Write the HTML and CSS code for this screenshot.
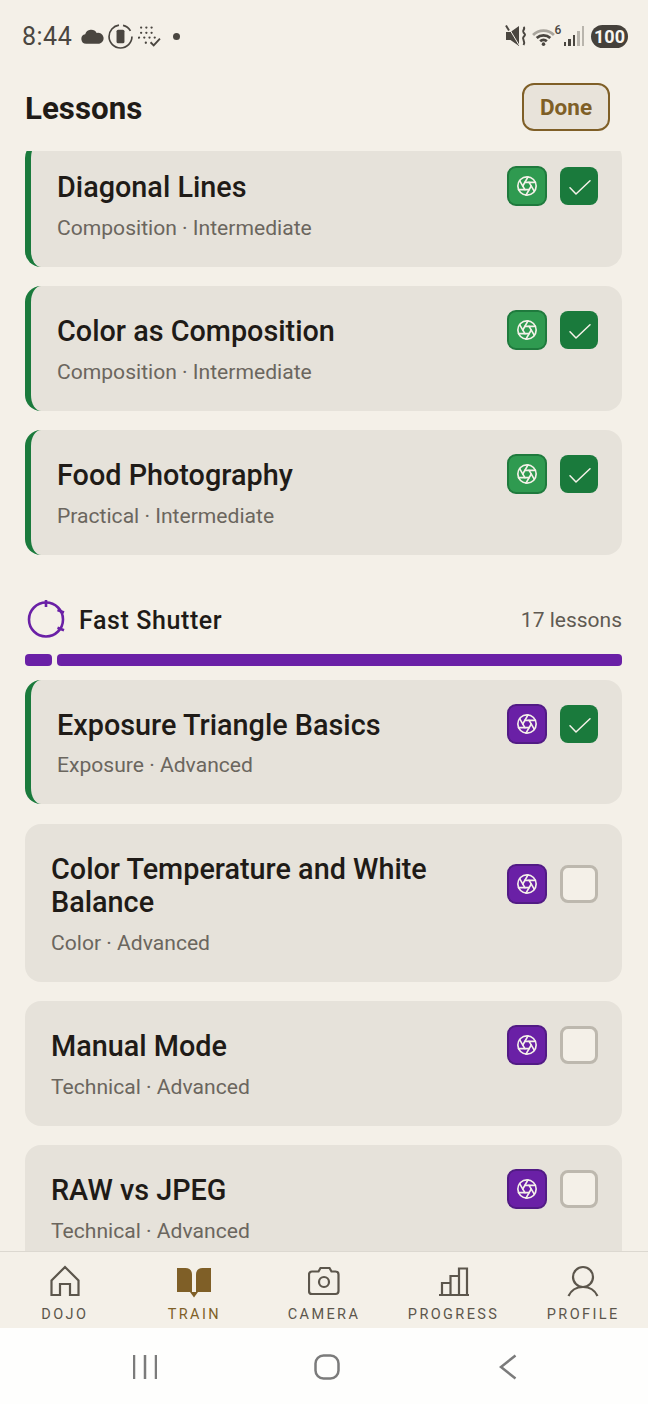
FILE: index.html
```html
<!DOCTYPE html>
<html lang="en">
<head>
    <meta charset="UTF-8">
    <meta name="viewport" content="width=device-width, initial-scale=1.0">
    <title>Lessons</title>
    <link rel="stylesheet" href="styles.css">
</head>
<body>
    <!-- shared icons -->
    <svg class="defs" width="0" height="0">
        <symbol id="aperture" viewBox="0 0 24 24" fill="none" stroke="currentColor" stroke-width="1.800" stroke-linecap="round" stroke-linejoin="round">
            <circle cx="12" cy="12" r="10"/>
            <path d="m14.31 8 5.74 9.94"/>
            <path d="M9.69 8h11.48"/>
            <path d="m7.38 12 5.74-9.94"/>
            <path d="M9.69 16 3.95 6.06"/>
            <path d="M14.31 16H2.83"/>
            <path d="m16.62 12-5.74 9.94"/>
        </symbol>
        <symbol id="check" viewBox="0 0 24 24" fill="none" stroke="currentColor" stroke-width="1.500" stroke-linecap="round" stroke-linejoin="round">
            <path d="M23 6.700 9 20 3 13.700"/>
        </symbol>
    </svg>

    <div class="app">
        <div class="status-bar">
            <div class="status-left">
                <span class="time">8:44</span>
                <svg class="st-cloud" viewBox="0 0 22 14"><path d="M5 14a4.600 4.600 0 0 1-1-9.100A6 6 0 0 1 15 3.600 5.300 5.300 0 0 1 17.500 14z"/></svg>
                <svg class="st-phone" viewBox="0 0 24 24">
                    <circle class="ring" cx="12" cy="12" r="11"/>
                    <rect x="8.200" y="5.500" width="7.600" height="13" rx="1.500"/>
                </svg>
                <svg class="st-dots" viewBox="0 0 22 20">
                    <circle cx="3" cy="1.500" r="1.100"/><circle cx="8" cy="1.500" r="1.100"/><circle cx="13" cy="1.500" r="1.100"/>
                    <circle cx="3" cy="6.500" r="1.100"/><circle cx="8" cy="6.500" r="1.100"/><circle cx="13" cy="6.500" r="1.100"/>
                    <circle cx="1" cy="11" r="1.100"/><circle cx="6" cy="11" r="1.100"/><circle cx="11" cy="11" r="1.100"/><circle cx="16" cy="11" r="1.100"/>
                    <circle cx="7.500" cy="16" r="1.100"/>
                    <path class="tick" d="M12 15.500l3 3 6-6.500"/>
                </svg>
                <span class="st-dot"></span>
            </div>
            <div class="status-right">
                <svg class="st-mute" viewBox="0 0 22 22">
                    <path d="M1 7h4.500L14 1v20l-8.500-6H1z"/>
                    <path class="cut" d="M3.500 2.500 14 20"/>
                    <path class="stub" d="M1 0.500l3 5"/>
                    <path class="wave" d="M18.500 2c2.500 2-2 3.500 0 5.500s2 2.500 0 4.500 2.500 4 0 8"/>
                </svg>
                <span class="st-wifi">
                    <svg viewBox="0 0 22 18">
                        <path class="wifi-off" d="M1 7.500a14 14 0 0 1 20 0"/>
                        <path class="wifi-on" d="M4.500 10.500a9.500 9.500 0 0 1 13 0"/>
                        <path class="wifi-on" d="M7.800 13.500a4.800 4.800 0 0 1 6.400 0"/>
                        <circle cx="11" cy="16.300" r="1.700"/>
                    </svg>
                    <span class="wifi-num">6</span>
                </span>
                <span class="st-signal">
                    <i class="on s1"></i><i class="on s2"></i><i class="on s3"></i><i class="s4"></i><i class="s5"></i>
                </span>
                <span class="st-battery">100</span>
            </div>
        </div>

        <div class="header">
            <h1>Lessons</h1>
            <button type="button" class="done-button">Done</button>
        </div>

        <div class="lesson-scroll">
            <div class="lesson-list">
                <div class="lesson done green">
                    <div class="lesson-top">
                        <div class="lesson-title">Diagonal Lines</div>
                        <div class="lesson-actions">
                            <span class="shot-button"><svg><use href="#aperture"/></svg></span>
                            <span class="tick-box"><svg><use href="#check"/></svg></span>
                        </div>
                    </div>
                    <div class="lesson-sub">Composition · Intermediate</div>
                </div>

                <div class="lesson done green">
                    <div class="lesson-top">
                        <div class="lesson-title">Color as Composition</div>
                        <div class="lesson-actions">
                            <span class="shot-button"><svg><use href="#aperture"/></svg></span>
                            <span class="tick-box"><svg><use href="#check"/></svg></span>
                        </div>
                    </div>
                    <div class="lesson-sub">Composition · Intermediate</div>
                </div>

                <div class="lesson done green">
                    <div class="lesson-top">
                        <div class="lesson-title">Food Photography</div>
                        <div class="lesson-actions">
                            <span class="shot-button"><svg><use href="#aperture"/></svg></span>
                            <span class="tick-box"><svg><use href="#check"/></svg></span>
                        </div>
                    </div>
                    <div class="lesson-sub">Practical · Intermediate</div>
                </div>

                <div class="section-head">
                    <svg class="section-icon" viewBox="0 0 40 40" fill="none">
                        <circle cx="20" cy="19.500" r="17"/>
                        <path d="M20 0v7M31.500 10 38 12.500M31.500 27.700 38 30.300"/>
                    </svg>
                    <span class="section-name">Fast Shutter</span>
                    <span class="section-count">17 lessons</span>
                </div>
                <div class="section-bar">
                    <span class="bar-short"></span>
                    <span class="bar-long"></span>
                </div>

                <div class="lesson done purple">
                    <div class="lesson-top">
                        <div class="lesson-title">Exposure Triangle Basics</div>
                        <div class="lesson-actions">
                            <span class="shot-button"><svg><use href="#aperture"/></svg></span>
                            <span class="tick-box"><svg><use href="#check"/></svg></span>
                        </div>
                    </div>
                    <div class="lesson-sub">Exposure · Advanced</div>
                </div>

                <div class="lesson purple">
                    <div class="lesson-top">
                        <div class="lesson-title">Color Temperature and White Balance</div>
                        <div class="lesson-actions">
                            <span class="shot-button"><svg><use href="#aperture"/></svg></span>
                            <span class="tick-box"></span>
                        </div>
                    </div>
                    <div class="lesson-sub">Color · Advanced</div>
                </div>

                <div class="lesson purple">
                    <div class="lesson-top">
                        <div class="lesson-title">Manual Mode</div>
                        <div class="lesson-actions">
                            <span class="shot-button"><svg><use href="#aperture"/></svg></span>
                            <span class="tick-box"></span>
                        </div>
                    </div>
                    <div class="lesson-sub">Technical · Advanced</div>
                </div>

                <div class="lesson purple">
                    <div class="lesson-top">
                        <div class="lesson-title">RAW vs JPEG</div>
                        <div class="lesson-actions">
                            <span class="shot-button"><svg><use href="#aperture"/></svg></span>
                            <span class="tick-box"></span>
                        </div>
                    </div>
                    <div class="lesson-sub">Technical · Advanced</div>
                </div>
            </div>
        </div>

        <div class="tab-bar">
            <div class="tab">
                <svg class="tab-icon" viewBox="0 0 32 32"><path d="M2.500 15.500 16 2l13.500 13.500V30H21V19H11v11H2.500z"/></svg>
                <span class="tab-label">DOJO</span>
            </div>
            <div class="tab active">
                <svg class="tab-icon book" viewBox="0 0 34 30">
                    <path d="M0 0h8.500c4 0 6.500 2.500 6.500 6.500V24H0z"/>
                    <path d="M34 0h-8.500c-4 0-6.500 2.500-6.500 6.500V24h15z"/>
                    <path d="M13 24h8l-4 5.500z"/>
                </svg>
                <span class="tab-label">TRAIN</span>
            </div>
            <div class="tab">
                <svg class="tab-icon" viewBox="0 0 32 32">
                    <path d="M10.500 6.500 12.500 3h9l2 3.500h4a3 3 0 0 1 3 3V26a3 3 0 0 1-3 3H4a3 3 0 0 1-3-3V9.500a3 3 0 0 1 3-3z"/>
                    <circle cx="16" cy="17" r="5"/>
                </svg>
                <span class="tab-label">CAMERA</span>
            </div>
            <div class="tab">
                <svg class="tab-icon" viewBox="0 0 32 32">
                    <path d="M1 30h30M4 30V18h8.500V30M12.500 30V11h8.500V30M21 30V3.500h8V30"/>
                </svg>
                <span class="tab-label">PROGRESS</span>
            </div>
            <div class="tab">
                <svg class="tab-icon" viewBox="0 0 32 32">
                    <circle cx="16" cy="12" r="10"/>
                    <path d="M1.500 31c3-6.500 8-9 14.500-9s11.500 2.500 14.500 9"/>
                </svg>
                <span class="tab-label">PROFILE</span>
            </div>
        </div>

        <div class="nav-bar">
            <svg class="nav-recent" viewBox="0 0 24 24"><path d="M1 0v24M12 0v24M23 0v24"/></svg>
            <svg class="nav-home" viewBox="0 0 26 26"><rect x="1.500" y="1.500" width="23" height="23" rx="8"/></svg>
            <svg class="nav-back" viewBox="0 0 18 26"><path d="M16.500 1.500 2 13l14.500 11.500"/></svg>
        </div>
    </div>
</body>
</html>
```

FILE: styles.css
```css
* {
    box-sizing: border-box;
}
body {
    margin: 0;
    font-family: Roboto, "Liberation Sans", sans-serif;
    background-color: #f4f0e8;
    color: #1f1b17;
}
.defs {
    display: block;
    height: 0;
}
.app {
    display: flex;
    flex-direction: column;
    width: 648px;
    height: 1404px;
    overflow: hidden;
}

/* status bar */
.status-bar {
    display: flex;
    justify-content: space-between;
    align-items: center;
    height: 72px;
    padding: 0 20px 0 22px;
    color: #4a4640;
    fill: #4a4640;
}
.status-left,
.status-right {
    display: flex;
    align-items: center;
}
.time {
    font-size: 25px;
    letter-spacing: 0.500px;
    margin-right: 9px;
}
.st-cloud {
    width: 23px;
    height: 15px;
    margin-right: 4px;
}
.st-phone {
    width: 25px;
    height: 25px;
    margin-right: 5px;
}
.st-phone .ring {
    fill: none;
    stroke: #4a4640;
    stroke-width: 1.600;
    stroke-dasharray: 50 4 9 6;
}
.st-dots {
    width: 23px;
    height: 21px;
}
.st-dots .tick {
    fill: none;
    stroke: #4a4640;
    stroke-width: 1.800;
}
.st-dot {
    width: 7px;
    height: 7px;
    border-radius: 50%;
    background-color: #4a4640;
    margin-left: 12px;
}
.st-mute {
    width: 22px;
    height: 22px;
    margin-right: 5px;
}
.st-mute .cut {
    stroke: #f4f0e8;
    stroke-width: 1;
}
.st-mute .stub {
    stroke: #4a4640;
    stroke-width: 2;
}
.st-mute .wave {
    fill: none;
    stroke: #4a4640;
    stroke-width: 2;
}
.st-wifi {
    display: flex;
    align-items: flex-start;
    width: 32px;
}
.st-wifi svg {
    width: 23px;
    height: 19px;
}
.wifi-off {
    fill: none;
    stroke: #a9a59d;
    stroke-width: 2.600;
}
.wifi-on {
    fill: none;
    stroke: #4a4640;
    stroke-width: 2.600;
}
.wifi-num {
    font-size: 12px;
    font-weight: 500;
    line-height: 12px;
    margin-top: -3px;
}
.st-signal {
    display: flex;
    align-items: flex-end;
    gap: 2px;
    height: 20px;
    margin-right: 7px;
}
.st-signal i {
    width: 2.500px;
    background-color: #b9b5ad;
}
.st-signal .on {
    background-color: #4a4640;
}
.s1 { height: 4px; }
.s2 { height: 7px; }
.s3 { height: 11px; }
.s4 { height: 15px; }
.s5 { height: 20px; }
.st-battery {
    width: 37px;
    height: 23px;
    border-radius: 12px;
    background-color: #45413b;
    color: #f8f6f1;
    font-size: 18px;
    font-weight: 700;
    line-height: 23px;
    text-align: center;
}

/* header */
.header {
    display: flex;
    justify-content: space-between;
    align-items: center;
    height: 79px;
    padding: 0 38px 10px 25px;
}
h1 {
    margin: 3px 0 0;
    font-size: 31.300px;
    font-weight: 700;
}
.done-button {
    width: 88px;
    height: 48px;
    padding: 0;
    border: 2.500px solid #7f5f27;
    border-radius: 12px;
    background-color: #e8e3da;
    color: #7f5f27;
    font-family: inherit;
    font-size: 22.500px;
    font-weight: 700;
}

/* lessons */
.lesson-scroll {
    flex: 1;
    min-height: 0;
    overflow: hidden;
}
.lesson-list {
    margin-top: -9px;
    padding: 0 26px 0 25px;
}
.lesson {
    margin-bottom: 19.500px;
    padding: 29px 24px 25px 26px;
    border-radius: 16px;
    background-color: #e6e2da;
}
.lesson.done {
    border-left: 6px solid #1a7a3c;
}
.lesson-top {
    display: flex;
    align-items: center;
}
.lesson-title {
    flex: 1;
    padding-right: 40px;
    font-size: 28.800px;
    font-weight: 500;
    line-height: 33.500px;
}
.lesson-actions {
    display: flex;
    align-items: center;
    gap: 13px;
    margin: -5.500px 0 -2px;
}
.shot-button {
    display: flex;
    align-items: center;
    justify-content: center;
    width: 40px;
    height: 40px;
    border: 2px solid;
    border-radius: 9px;
    color: #f5f1e9;
}
.shot-button svg {
    width: 22px;
    height: 22px;
}
.green .shot-button {
    background-color: #2f9a50;
    border-color: #1f7a3d;
}
.purple .shot-button {
    background-color: #6a20a6;
    border-color: #521b85;
}
.tick-box {
    display: flex;
    align-items: center;
    justify-content: center;
    width: 38px;
    height: 38px;
    border: 3px solid #bdb8ae;
    border-radius: 8px;
    background-color: #f4f0e8;
    color: #f5f1e9;
}
.lesson.done .tick-box {
    border: none;
    background-color: #1a7a3c;
}
.tick-box svg {
    width: 24px;
    height: 24px;
}
.lesson-sub {
    margin-top: 9px;
    font-size: 21.100px;
    line-height: 28px;
    color: #6b665e;
}

/* section heading */
.section-head {
    display: flex;
    align-items: center;
    height: 40px;
    margin-top: 45.500px;
}
.section-icon {
    width: 40px;
    height: 40px;
    margin-left: 1px;
    margin-right: 13px;
    stroke: #6a20a6;
    stroke-width: 2.600;
}
.section-name {
    flex: 1;
    font-size: 25px;
    font-weight: 500;
    letter-spacing: 0.600px;
}
.section-count {
    font-size: 21px;
    color: #5f5a52;
}
.section-bar {
    display: flex;
    gap: 5px;
    height: 12px;
    margin: 14px 0 13.500px;
}
.section-bar span {
    border-radius: 4px;
    background-color: #6a20a6;
}
.bar-short {
    width: 27px;
}
.bar-long {
    flex: 1;
}

/* bottom tabs */
.tab-bar {
    display: grid;
    grid-template-columns: repeat(5, 1fr);
    height: 77px;
    padding-top: 13px;
    border-top: 1px solid #dcd8d0;
    background-color: #f4f0e8;
}
.tab {
    display: flex;
    flex-direction: column;
    align-items: center;
    color: #5c564c;
}
.tab-icon {
    width: 32px;
    height: 32px;
    fill: none;
    stroke: currentColor;
    stroke-width: 2.200;
}
.tab-icon.book {
    width: 34px;
    height: 30px;
    margin: 3px 0 -1px;
    fill: currentColor;
    stroke: none;
}
.tab.active {
    color: #7f5f27;
}
.tab-label {
    margin-top: 9px;
    font-size: 14.500px;
    font-weight: 450;
    letter-spacing: 2.400px;
    line-height: 17px;
}

/* android nav */
.nav-bar {
    display: grid;
    grid-template-columns: repeat(3, 1fr);
    justify-items: center;
    align-items: center;
    height: 76px;
    padding: 2px 49px 0 54.500px;
    background-color: #fefefd;
}
.nav-bar svg {
    fill: none;
    stroke: #7b7b7b;
    stroke-width: 2.500;
}
.nav-recent {
    width: 24px;
    height: 24px;
}
.nav-home {
    width: 26px;
    height: 26px;
}
.nav-back {
    width: 18px;
    height: 26px;
}
```
